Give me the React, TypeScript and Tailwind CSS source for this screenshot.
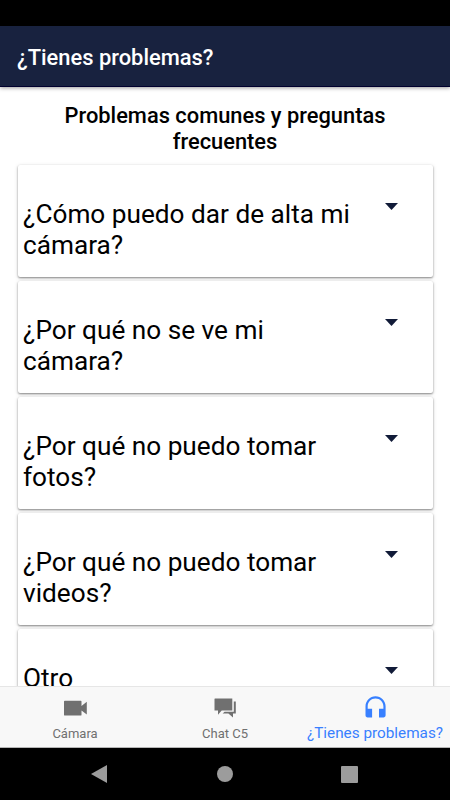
import React, { useState } from "react";

interface Question {
  id: string;
  title: string;
}

const questions: Question[] = [
  { id: "1", title: "¿Cómo puedo dar de alta mi cámara?" },
  { id: "2", title: "¿Por qué no se ve mi cámara?" },
  { id: "3", title: "¿Por qué no puedo tomar fotos?" },
  { id: "4", title: "¿Por qué no puedo tomar videos?" },
  { id: "5", title: "Otro" },
];

const CameraIcon = () => (
  <svg className="w-6 h-6" viewBox="0 0 24 24" fill="currentColor">
    <path d="M1.8 5.8h15.9c.5 0 .8.3.8.8v4.3l5.3-4.1v12.6l-5.3-4v4.3c0 .6-.3.9-.8.9H1.8c-.5 0-.8-.3-.8-.9V6.6c0-.5.3-.8.8-.8z" />
  </svg>
);

const ChatIcon = () => (
  <svg className="w-6 h-6" viewBox="0 0 24 24" fill="currentColor">
    <path d="M2 3.6h17.3v12H8.7L5 19.8v-4.2H1.5V4.1c0-.3.2-.5.5-.5z" />
    <path d="M20.8 6.6h2v12H20v4l-4.6-4H9.6l2-1.8h9.2z" />
  </svg>
);

const HeadsetIcon = () => (
  <svg className="w-6 h-6" viewBox="0 0 24 24" fill="currentColor">
    <path d="M12.5 1.2C7 1.2 2.5 5.7 2.5 11.3v9c0 1.3.9 2.2 2.1 2.2h4.5v-8.8H4.7v-2.4c0-4.4 3.4-7.9 7.8-7.9s7.9 3.5 7.9 7.9v2.4H16v8.8h4.5c1.2 0 2.1-.9 2.1-2.2v-9c0-5.6-4.5-10.1-10.1-10.1z" />
  </svg>
);

const tabs = [
  { icon: CameraIcon, label: "Cámara", value: "camera" },
  { icon: ChatIcon, label: "Chat C5", value: "chat" },
  { icon: HeadsetIcon, label: "¿Tienes problemas?", value: "help" },
];

const App: React.FC = () => {
  const [activeTab, setActiveTab] = useState("help");

  return (
    <div className="w-[450px] h-[800px] flex flex-col overflow-hidden bg-white font-['Roboto',sans-serif] text-black">
      {/* Status bar */}
      <div className="h-[26px] shrink-0 bg-black" />

      <header className="h-[61px] shrink-0 z-10 flex items-center bg-[#18223f] border-b border-[#00002e] pl-[17px] pt-[4px] shadow-[0_1px_4px_rgba(0,0,0,0.4)]">
        <h1 className="text-[21.9px] leading-[32px] font-medium text-white whitespace-nowrap">
          ¿Tienes problemas?
        </h1>
      </header>

      <main className="flex-1 min-h-0 overflow-hidden">
        <h2 className="mt-[16px] mb-[10px] px-10 text-center text-[21.85px] leading-[26px] font-medium">
          Problemas comunes y preguntas
          <br />
          frecuentes
        </h2>
        <div className="flex flex-col gap-1 pl-[18px] pr-[17px]">
          {questions.map((question) => (
            <button
              key={question.id}
              className="h-[112px] shrink-0 flex items-start text-left bg-white rounded-[2px] pl-[5px] pt-[34px] shadow-[0_1px_2px_rgba(0,0,0,0.4),0_1px_4px_rgba(0,0,0,0.15)]"
            >
              <span className="w-[345px] text-[26.2px] leading-[31px]">
                {question.title}
              </span>
              <svg
                className="w-[13px] h-[7px] mt-1 ml-[17px]"
                viewBox="0 0 13 7"
                fill="#111b38"
              >
                <path d="M0 0h13L6.5 7z" />
              </svg>
            </button>
          ))}
        </div>
      </main>

      {/* Bottom tabs */}
      <nav className="h-[62px] shrink-0 z-10 grid grid-cols-3 bg-[#f8f8f8] border-t border-t-[#e6e6e6] border-b border-b-[#b5b5b5]">
        {tabs.map((tab) => (
          <button
            key={tab.value}
            onClick={() => setActiveTab(tab.value)}
            className={`flex flex-col items-center pt-[8px] whitespace-nowrap ${
              activeTab === tab.value
                ? "text-[#3880ff] text-[15.3px] leading-[28px]"
                : "text-[#707070] text-[13px] leading-[30px]"
            }`}
          >
            <tab.icon />
            <span>{tab.label}</span>
          </button>
        ))}
      </nav>

      {/* System navigation */}
      <div className="h-[52px] shrink-0 flex items-center bg-black text-[#9c9c9c]">
        <svg className="w-4 h-[18px] ml-[91px]" viewBox="0 0 16 18" fill="currentColor">
          <path d="M16 0v18L0 9z" />
        </svg>
        <div className="w-4 h-4 ml-[110px] rounded-full bg-[#9c9c9c]" />
        <div className="w-[17px] h-[17px] ml-[108px] rounded-[1px] bg-[#9c9c9c]" />
      </div>
    </div>
  );
};

export default App;
